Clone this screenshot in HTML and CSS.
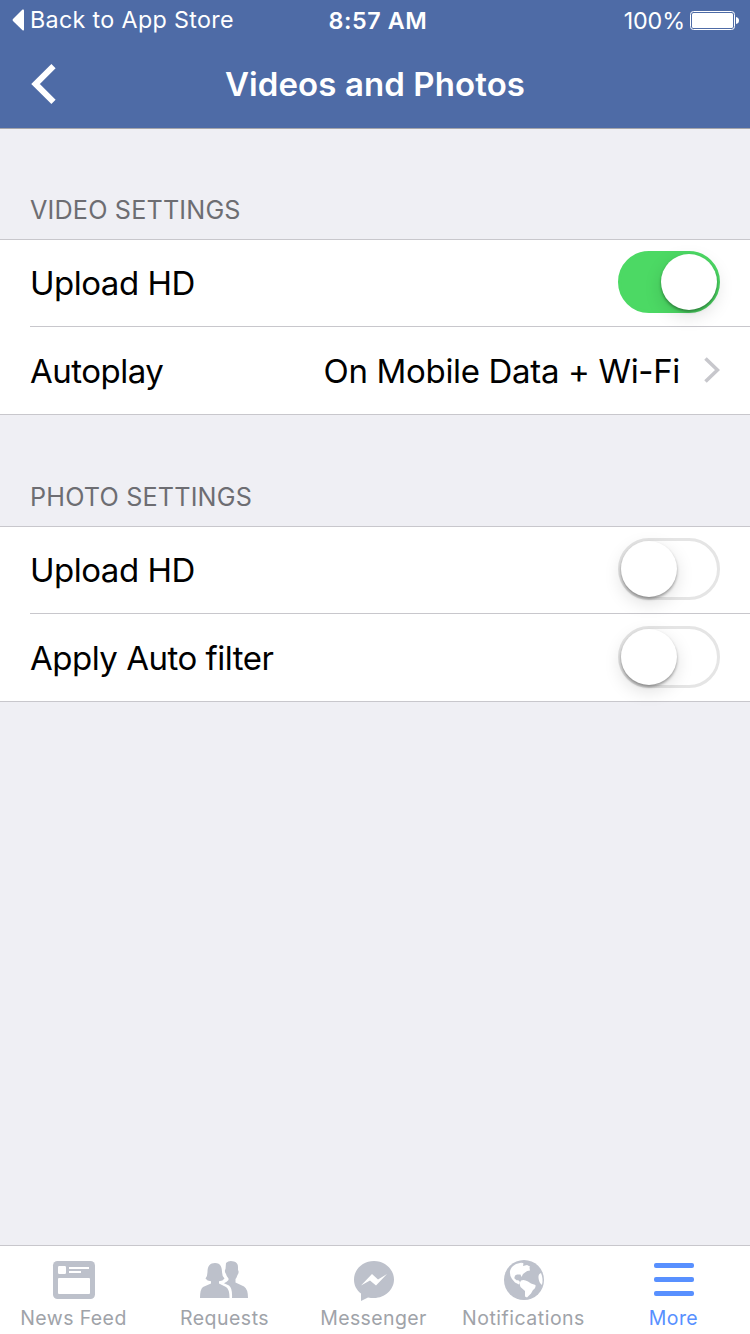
FILE: index.html
```html
<!DOCTYPE html>
<html lang="en">
<head>
<meta charset="utf-8">
<title>Videos and Photos</title>
<link rel="stylesheet" href="styles.css">
</head>
<body>
<div class="screen">
  <header class="header">
    <div class="status">
      <div class="status-back">
        <svg width="12" height="22" viewBox="0 0 12 22"><path d="M10.500 .6Q12 0 12 1.500V20.500Q12 22 10.500 21.200L1 12Q0 11 1 10Z" fill="#fff"/></svg>
        <span class="back-label">Back to App Store</span>
      </div>
      <span class="time">8:57 AM</span>
      <div class="status-power">
        <span class="percent">100%</span>
        <svg width="49" height="19" viewBox="0 0 49 19"><rect x=".5" y=".5" width="44" height="18" rx="3" fill="none" stroke="#fff"/><rect x="2" y="2" width="41" height="15" rx="1.500" fill="#fff"/><path d="M46 6Q49 6.500 49 9.500T46 13Z" fill="#fff"/></svg>
      </div>
    </div>
    <div class="nav">
      <svg class="nav-back" width="25" height="40" viewBox="0 0 25 40"><path d="M22.500 2.200 4.500 20 22.500 37.800" fill="none" stroke="#fff" stroke-width="6"/></svg>
      <h1 class="title">Videos and Photos</h1>
    </div>
  </header>
  <main class="content">
    <h2 class="section-title video-title">VIDEO SETTINGS</h2>
    <section class="group">
      <div class="row"><span class="label">Upload HD</span><span class="switch on"><i class="knob"></i></span></div>
      <div class="row second"><span class="label">Autoplay</span><span class="value">On Mobile Data + Wi-Fi</span>
        <svg class="chevron" width="16" height="26" viewBox="0 0 16 26"><path d="M1.500 1.500 13.500 13 1.500 24.500" fill="none" stroke="#c7c7cc" stroke-width="3.600"/></svg>
      </div>
    </section>
    <h2 class="section-title photo-title">PHOTO SETTINGS</h2>
    <section class="group">
      <div class="row"><span class="label">Upload HD</span><span class="switch"><i class="knob"></i></span></div>
      <div class="row second"><span class="label">Apply Auto filter</span><span class="switch"><i class="knob"></i></span></div>
    </section>
  </main>
  <nav class="tabs">
    <div class="tab"><svg width="50" height="44" viewBox="0 0 50 44"><rect x="4" y="3" width="42" height="38" rx="4.500" fill="#bdc1cb"/><g fill="#fff"><rect x="9" y="8" width="8" height="8" rx="1.200"/><rect x="20" y="9" width="20" height="2"/><rect x="20" y="13" width="12" height="2"/><rect x="9" y="20" width="32" height="16" rx="1"/></g></svg><span class="tab-label">News Feed</span></div>
    <div class="tab"><svg width="50" height="44" viewBox="0 0 50 44"><g fill="#bdc1cb"><path d="M16 5C22 5 23 10 23 14Q23 18 25.500 20.500Q24 23 20 23.300V25.500L27 29Q30.500 31 30.500 40H1Q1 31 4 29L12 25.500V23.300Q8 23 6.500 20.500Q8.500 18 8.500 14C8.500 8 11 5 16 5Z"/><path d="M27 5Q30 2 35 3.500Q39 4.500 39 9V12Q40.500 14 38.500 17Q37.500 20 36.500 21V24.500L45 28.500Q49 31 49 40H33Q33.500 30 30 27.500L25 25.200Q28 24 29.500 22V20.500Q27.500 18.500 27 16Q25 13 26.500 11Z"/></g></svg><span class="tab-label requests">Requests</span></div>
    <div class="tab"><svg width="50" height="44" viewBox="0 0 50 44"><path d="M25 3C14 3 5 11 5 21.500C5 27.500 7.500 32 12 35.500V43L19 39.500Q22 40 25 40C36 40 45 31.500 45 21.500S36 3 25 3Z" fill="#bdc1cb"/><path d="M12 27.500 23 16 29 21.500 38 16 27 27.500 21 22.500Z" fill="#fff"/></svg><span class="tab-label">Messenger</span></div>
    <div class="tab"><svg width="50" height="44" viewBox="0 0 50 44"><circle cx="25" cy="22" r="20" fill="#bdc1cb"/><g fill="#fff"><path d="M22 4.800 17 6Q12 8.500 11 13Q10.500 18 13 21L16 24.500 20 26.500 21 24 19 22 18 22.500 15.500 20.500Q15 17 18 16.500L21.500 16.500 22.500 19 24 16 28 13 31 12.500 30.500 10 27 9 25.500 11 23.500 9 24 6Z"/><path d="M22.500 4.500 24.500 5.500 24 8 28 7 31 8.500 29.500 12 26 14 23.500 12Z"/><path d="M22 22.500Q25 21 29 23.500L32 25.500 36.500 27Q37 30 34 32L32 35.500 28 39.500 26 38.500 26 33 21.500 29 20.500 25.500Z"/><path d="M42 15Q39 16 39.500 20Q40 25 43 27Q44.500 21 42 15Z"/></g></svg><span class="tab-label notifications">Notifications</span></div>
    <div class="tab active"><svg width="50" height="44" viewBox="0 0 50 44"><g fill="#5890ff"><rect x="5" y="5" width="40" height="5" rx="2"/><rect x="5" y="19" width="40" height="5" rx="2"/><rect x="5" y="33" width="40" height="5" rx="2"/></g></svg><span class="tab-label">More</span></div>
  </nav>
</div>
</body>
</html>
```
FILE: styles.css
```css
* { box-sizing: border-box; }
body { margin: 0; font-family: Inter, "Liberation Sans", sans-serif; }
svg { display: block; flex: none; }
h1, h2 { margin: 0; font-weight: 400; }
.screen { width: 750px; height: 1334px; display: flex; flex-direction: column; background: #efeff4; overflow: hidden; white-space: nowrap; }
.header { height: 129px; flex: none; background: #4e6ba6; border-bottom: 1px solid #a5a5aa; color: #fff; }
.status { height: 40px; display: grid; grid-template-columns: 1fr auto 1fr; align-items: center; padding: 0 11px 0 12px; font-size: 23.3px; }
.status-back, .status-power { display: flex; align-items: center; }
.status-back { gap: 6px; }
.status-power { justify-content: flex-end; gap: 5px; }
.back-label { letter-spacing: .33px; margin-top: -1px; }
.time { font-weight: 560; letter-spacing: .6px; padding-left: 5px; }
.percent { letter-spacing: -.1px; }
.nav { height: 88px; display: grid; grid-template-columns: 1fr auto 1fr; align-items: center; padding: 0 31px; }
.title { font-size: 33px; font-weight: 570; line-height: 40px; letter-spacing: .1px; }
.section-title { flex: none; font-size: 25.2px; line-height: 30px; color: #6d6d72; padding-left: 30px; letter-spacing: .17px; }
.video-title { height: 110px; padding-top: 66px; }
.photo-title { height: 111px; padding-top: 67px; }
.group { background: #fff; border-top: 1px solid #c8c7cc; border-bottom: 1px solid #c8c7cc; }
.row { height: 86px; display: flex; align-items: center; justify-content: space-between; margin-left: 30px; padding-right: 30px; font-size: 33px; color: #000; letter-spacing: -.5px; }
.row.second { height: 88px; border-top: 1px solid #c8c7cc; }
.value { margin-left: auto; margin-right: 24px; letter-spacing: -.33px; }
.chevron { margin-bottom: 1px; }
.switch { width: 102px; height: 62px; border-radius: 31px; border: 3px solid #e5e5e5; background: #fff; display: flex; margin-bottom: 2px; }
.second .switch { margin-bottom: 1px; }
.switch.on { background: #4cd964; border-color: #4cd964; justify-content: flex-end; }
.knob { width: 56px; height: 56px; border-radius: 50%; background: #fff; box-shadow: 0 6px 18px rgba(0,0,0,.13), 0 2px 3px rgba(0,0,0,.35); }
.tabs { height: 89px; margin-top: auto; flex: none; display: grid; grid-template-columns: repeat(5, 1fr); background: #fff; border-top: 1px solid #c8c7cc; color: #a0a3a9; }
.tab { display: flex; flex-direction: column; align-items: center; padding: 12px 3px 0 0; }
.tab-label { font-size: 19.5px; line-height: 24px; margin-top: 4px; letter-spacing: .4px; }
.requests, .notifications { letter-spacing: .5px; }
.requests { padding-left: 2px; }
.active { color: #5890ff; }
```
